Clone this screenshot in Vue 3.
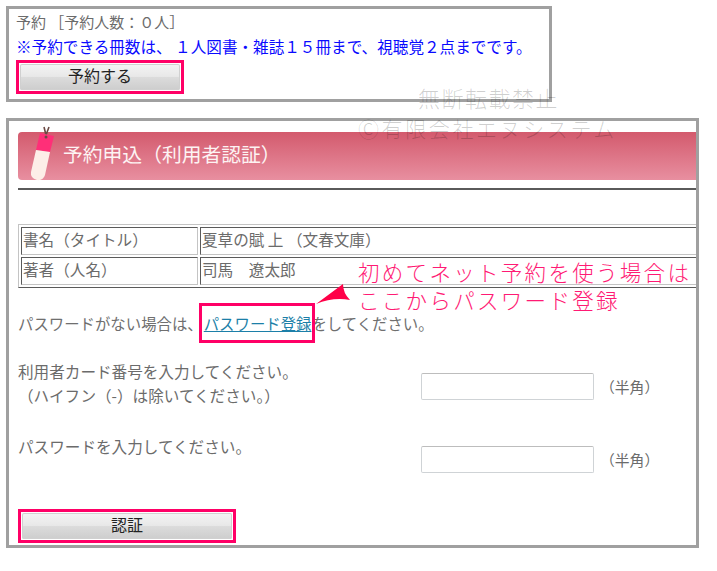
<template>
  <div class="page">
    <section class="top-box">
      <p class="status">予約 ［予約人数：０人］</p>
      <p class="notice">※予約できる冊数は、 １人図書・雑誌１５冊まで、視聴覚２点までです。</p>
      <button class="action reserve" type="button"><span>予約する</span></button>
    </section>

    <section class="auth-box">
      <header class="banner">
        <svg class="tag" width="28" height="56" viewBox="0 0 28 56" aria-hidden="true">
          <path d="M18 9 L16 1 M18 9 L21 1" stroke="#6b4a44" stroke-width="1.6" fill="none" />
          <path d="M12 7 L26 10 L22 26 L8 24 Z" fill="#ff2f78" />
          <path d="M8 24 L22 26 L17 49 Q15 55 9 54 Q2 52 3 46 Z" fill="#fdeee8" />
          <circle cx="18" cy="11" r="1.5" fill="#6b4a44" />
        </svg>
        <h1>予約申込（利用者認証）</h1>
      </header>
      <hr class="rule" />

      <table class="book">
        <tbody>
          <tr v-for="row in rows" :key="row.label">
            <th>{{ row.label }}</th>
            <td>{{ row.value }}</td>
          </tr>
        </tbody>
      </table>

      <p class="no-pass">
        パスワードがない場合は、<a class="register" href="#">パスワード登録</a>をしてください。
      </p>

      <div class="form">
        <div class="label">利用者カード番号を入力してください。<br />（ハイフン（-）は除いてください。）</div>
        <input class="field first" type="text" />
        <span class="unit first">（半角）</span>
        <div class="label second">パスワードを入力してください。</div>
        <input class="field second" type="password" />
        <span class="unit second">（半角）</span>
      </div>

      <button class="action auth" type="button"><span>認証</span></button>
    </section>

    <div class="note">初めてネット予約を使う場合は<br />ここからパスワード登録</div>
    <svg class="arrow" width="40" height="26" viewBox="0 0 40 26" aria-hidden="true">
      <path d="M1 24 L28 4 Q28 13 35 20 Q18 17 1 24 Z" fill="#ff0048" />
    </svg>
    <div class="mark mark-a">無断転載禁止</div>
    <div class="mark mark-b">Ⓒ有限会社エヌシステム</div>
  </div>
</template>

<script setup>
const rows = [
  { label: '書名（タイトル）', value: '夏草の賦 上 （文春文庫）' },
  { label: '著者（人名）', value: '司馬　遼太郎' },
]
</script>

<style>
html, body { background: #fff; }
</style>

<style scoped>
.page {
  position: relative;
  width: 717px;
  height: 571px;
  padding: 6px 0 0 6px;
  box-sizing: border-box;
  overflow: hidden;
  background: #fff;
  font-family: "Noto Sans CJK JP", "Noto Sans", sans-serif;
  font-size: 15.6px;
  color: #6b6b6b;
}
p { margin: 0; }
.top-box {
  width: 546px;
  height: 96px;
  box-sizing: border-box;
  border: 3px solid #a0a0a0;
  padding: 1px 0 0 7px;
}
.status { font-size: 15px; line-height: 24px; }
.notice { color: #0a0aff; line-height: 24px; }
.action {
  display: block;
  padding: 0;
  border: 3px solid #ff0066;
  background: #fff;
  font: inherit;
  font-size: 16px;
  color: #222;
  box-sizing: border-box;
  height: 34px;
}
.action span {
  display: block;
  height: 26px;
  margin: 1px;
  line-height: 22px;
  border-radius: 2px;
  background: linear-gradient(#f4f4f4 0, #e8e8e8 48%, #dcdcdc 50%, #cdcdcd 100%);
  box-shadow: inset 0 0 0 1px #d0d0d0;
}
.reserve { width: 168px; margin-top: 2px; }
.auth-box {
  width: 693px;
  height: 430px;
  margin-top: 16px;
  box-sizing: border-box;
  border: 3px solid #a0a0a0;
  padding: 11px 0 0 9px;
  overflow: hidden;
}
.banner {
  position: relative;
  height: 48px;
  display: flex;
  align-items: center;
  padding-left: 45px;
  border-radius: 4px 0 0 4px;
  background: linear-gradient(#d35a6d, #e88fa0);
}
.tag { position: absolute; left: 10px; top: -6px; }
.banner h1 {
  margin: 0 0 5px;
  font-size: 19.8px;
  font-weight: 400;
  color: #fdf3f3;
}
.rule {
  height: 2px;
  margin: 8px 0 0;
  border: 0;
  background: #5a5a5a;
}
.book {
  width: 690px;
  height: 64px;
  margin-top: 34px;
  box-sizing: border-box;
  table-layout: fixed;
  border-collapse: separate;
  border-spacing: 2px;
  border: 1px solid;
  border-color: #c4c4c4 #5a5a5a #5a5a5a #c4c4c4;
}
.book th, .book td {
  padding: 0 0 5px 1px;
  font-weight: 400;
  text-align: left;
  border: 1px solid;
  border-color: #5a5a5a #c4c4c4 #c4c4c4 #5a5a5a;
  line-height: 20px;
  height: 20px;
}
.book th { width: 174px; }
.no-pass {
  margin-top: 26px;
  line-height: 18px;
  white-space: nowrap;
  font-size: 15.4px;
  color: #6f6f6f;
}
.register {
  position: relative;
  margin-left: 1px;
  color: #1c7fa8;
  text-decoration: underline;
}
.register::after {
  content: "";
  position: absolute;
  left: -5px;
  right: -4px;
  top: -9px;
  bottom: -9px;
  border: 3px solid #ff0066;
}
.form {
  display: grid;
  grid-template-columns: 403px 173px auto;
  grid-template-rows: 48px 37px;
  row-gap: 27px;
  margin-top: 27px;
}
.label { line-height: 24px; white-space: nowrap; }
.field {
  width: 173px;
  height: 27px;
  box-sizing: border-box;
  margin: 0;
  border: 1px solid #cfd3d6;
  border-top-color: #bdbdbd;
  border-radius: 2px;
  background: #fff;
}
.field.first { margin-top: 14px; }
.field.second { margin-top: 12px; }
.unit {
  font-size: 14.8px;
  line-height: 20px;
  margin-left: 6px;
  white-space: nowrap;
}
.unit.first { margin-top: 18px; }
.unit.second { margin-top: 16px; }
.auth { width: 218px; margin-top: 38px; }
.note {
  position: absolute;
  left: 358px;
  top: 258px;
  font-size: 21.5px;
  line-height: 28px;
  letter-spacing: 2.3px;
  font-weight: 300;
  color: #ff1a74;
  white-space: nowrap;
}
.arrow { position: absolute; left: 315px; top: 280px; }
.mark {
  position: absolute;
  white-space: nowrap;
  font-weight: 300;
  color: rgba(0, 0, 0, 0.19);
}
.mark-a { left: 418px; top: 83px; font-size: 22px; letter-spacing: 1.5px; line-height: 28px; }
.mark-b { left: 358px; top: 114px; font-size: 21px; letter-spacing: 2.6px; line-height: 28px; }
</style>
